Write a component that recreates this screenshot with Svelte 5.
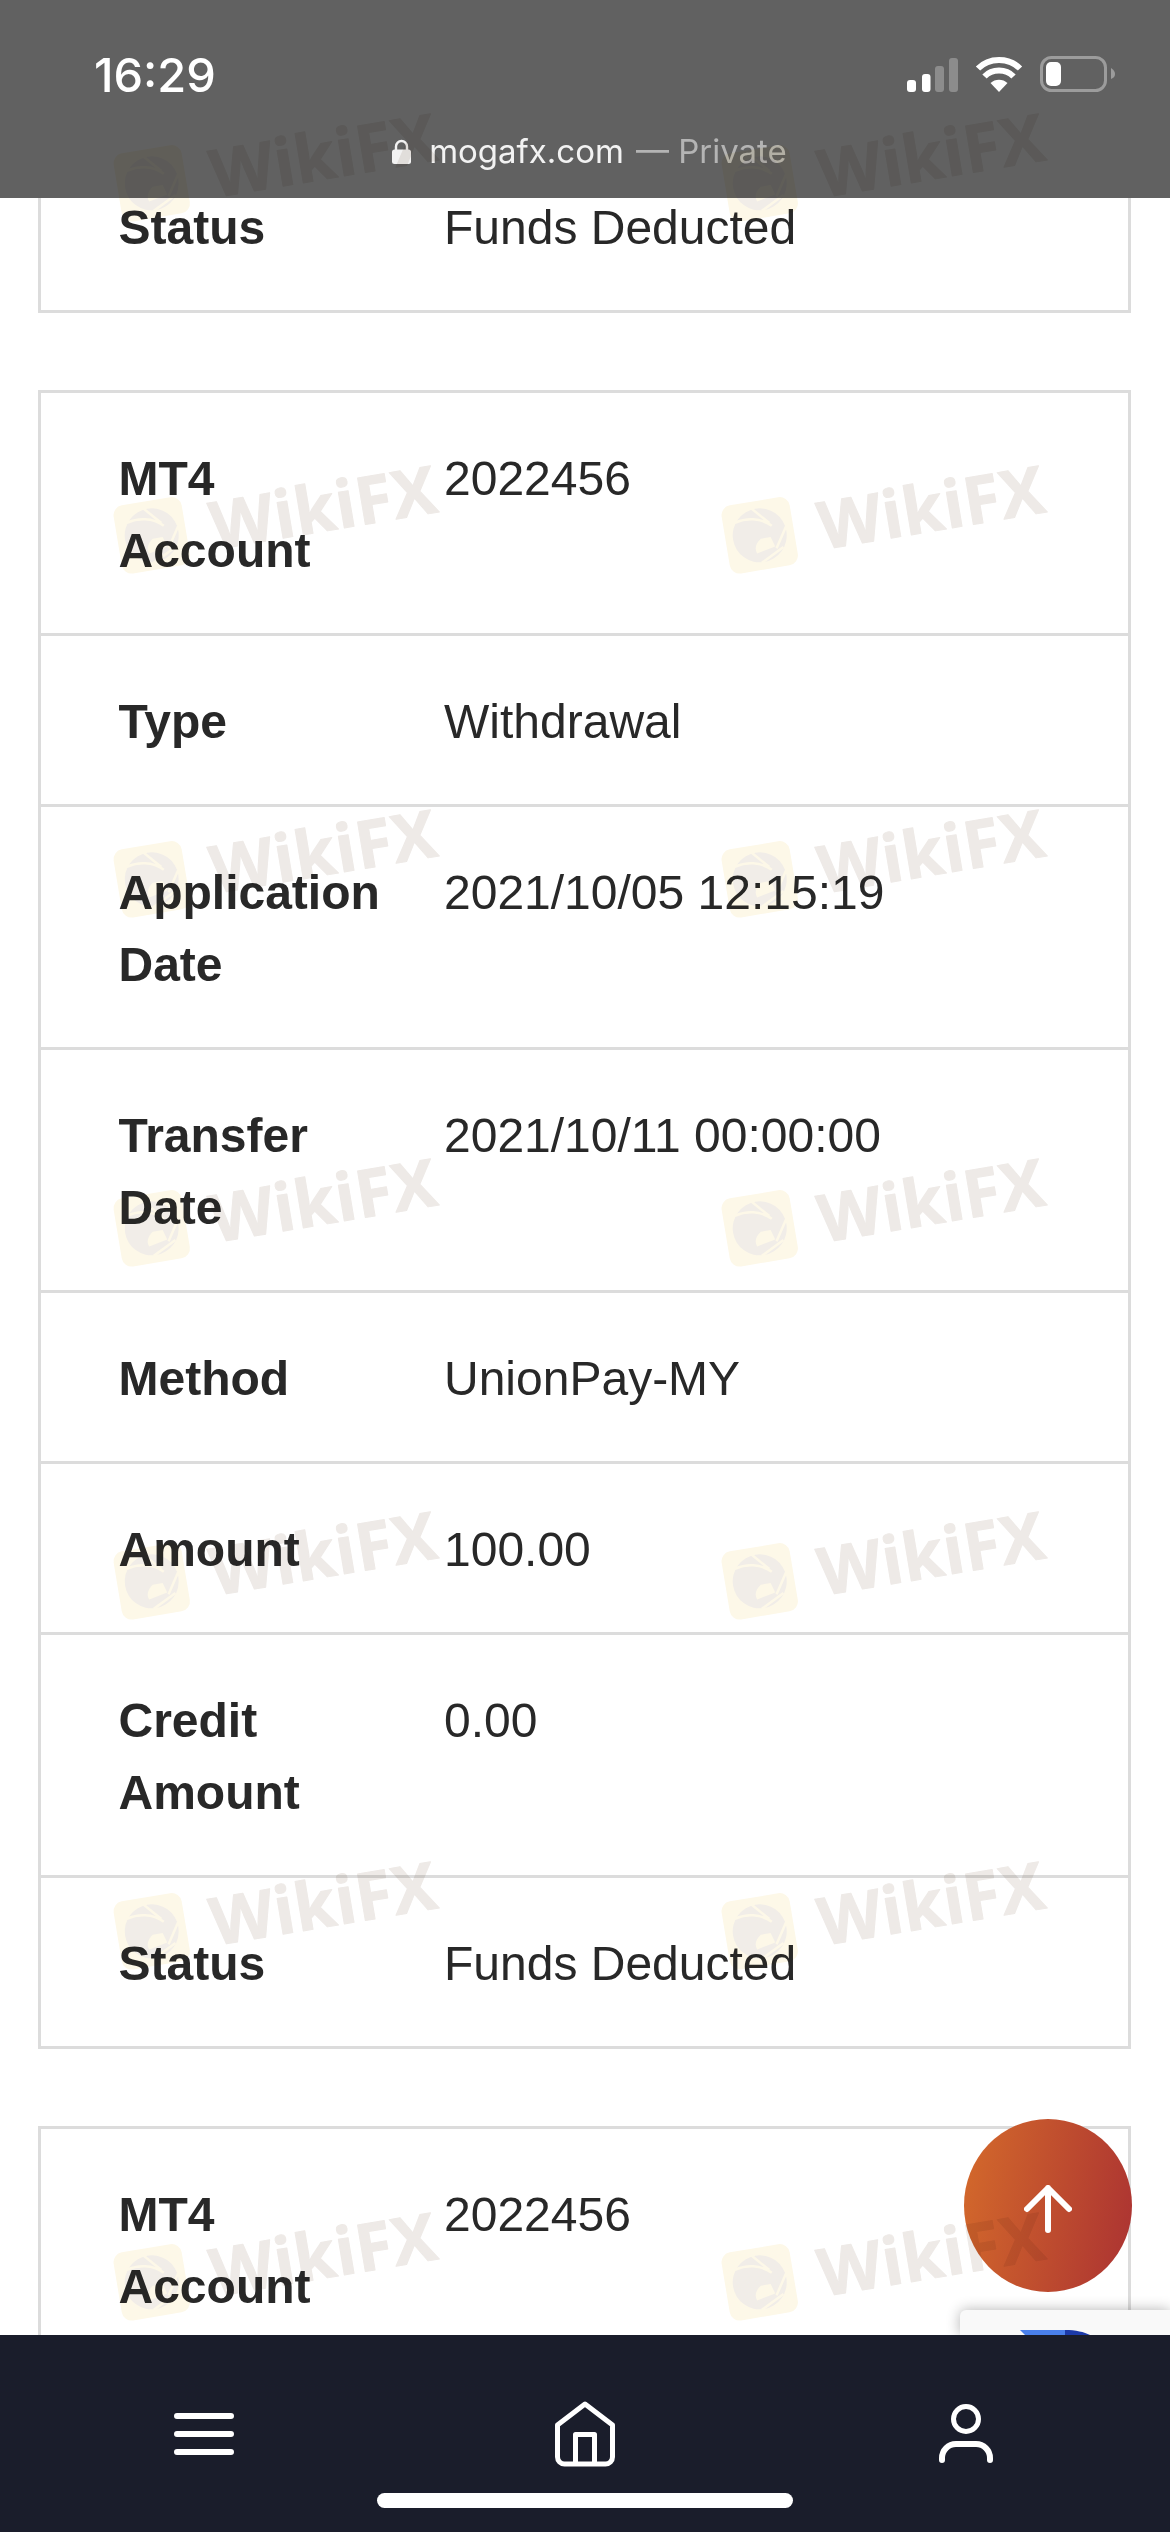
<script>
	const transactions = [0, 1, 2].map(() => [
		{ label: 'MT4 Account', value: '2022456' },
		{ label: 'Type', value: 'Withdrawal' },
		{ label: 'Application Date', value: '2021/10/05 12:15:19' },
		{ label: 'Transfer Date', value: '2021/10/11 00:00:00' },
		{ label: 'Method', value: 'UnionPay-MY' },
		{ label: 'Amount', value: '100.00' },
		{ label: 'Credit Amount', value: '0.00' },
		{ label: 'Status', value: 'Funds Deducted' }
	]);

	// watermark tile tops, one row every 350px or so
	const markRows = [155, 507, 851, 1200, 1553, 1903, 2254];
	const markCols = [112, 720];
</script>

<div class="phone">
	<header class="topbar">
		<div class="status">
			<span class="time">16:29</span>
			<div class="status-icons">
				<svg width="51" height="34" viewBox="0 0 51 34" aria-hidden="true">
					<rect x="0" y="22" width="9" height="12" rx="3" fill="#fff" />
					<rect x="15" y="16" width="8.5" height="18" rx="3" fill="#fff" />
					<rect x="28" y="8" width="9" height="26" rx="3" fill="#8c8c8c" />
					<rect x="42" y="0" width="9" height="34" rx="3" fill="#8c8c8c" />
				</svg>
				<svg width="48" height="36" viewBox="0 0 48 36" aria-hidden="true">
					<path d="M24 36 L15.5 27 C20 22.5 28 22.5 32.5 27 Z" fill="#fff" />
					<path d="M9.5 20.5 C17 12.5 31 12.5 38.5 20.5" fill="none" stroke="#fff" stroke-width="6" />
					<path d="M3 12.5 C14 1 34 1 45 12.5" fill="none" stroke="#fff" stroke-width="6" />
				</svg>
				<svg width="75" height="36" viewBox="0 0 75 36" aria-hidden="true">
					<rect x="1.5" y="1.5" width="64" height="33" rx="10" fill="none" stroke="#9c9c9c" stroke-width="3" />
					<rect x="6" y="6" width="15" height="24" rx="5" fill="#fff" />
					<path d="M71 12 C74 14 75 16 75 18 C75 20 74 22 71 23 Z" fill="#9c9c9c" />
				</svg>
			</div>
		</div>
		<div class="address">
			<svg width="19" height="25" viewBox="0 0 19 25" aria-hidden="true">
				<path d="M4 11 V7.5 a5.5 5.5 0 0 1 11 0 V11" fill="none" stroke="#f2f2f2" stroke-width="2.4" />
				<rect x="0" y="10.5" width="19" height="14.5" rx="2.5" fill="#f2f2f2" />
			</svg>
			<span class="domain">mogafx.com</span>
			<span class="private">— Private</span>
		</div>
	</header>

	<main class="content">
		{#each transactions as rows}
			<section class="card">
				{#each rows as row}
					<div class="row">
						<div class="label">{row.label}</div>
						<div class="value">{row.value}</div>
					</div>
				{/each}
			</section>
		{/each}
	</main>

	<nav class="tabbar">
		<div class="tabs">
			<svg width="60" height="42" viewBox="0 0 60 42" aria-hidden="true">
				<path d="M3 3 H57 M3 21 H57 M3 39 H57" stroke="#fff" stroke-width="6" stroke-linecap="round" />
			</svg>
			<svg width="60" height="66" viewBox="0 0 60 66" aria-hidden="true">
				<path d="M30 3 L2.5 24 V56 a7 7 0 0 0 7 7 H50.5 a7 7 0 0 0 7-7 V24 Z" fill="none" stroke="#fff" stroke-width="5" stroke-linejoin="round" />
				<path d="M20.5 63 V33.5 H39.5 V63" fill="none" stroke="#fff" stroke-width="5" stroke-linejoin="round" />
			</svg>
			<svg width="54" height="60" viewBox="0 0 54 60" aria-hidden="true">
				<circle cx="27" cy="15" r="12.5" fill="none" stroke="#fff" stroke-width="5" />
				<path d="M3 56 V54 a14 14 0 0 1 14-14 H37 a14 14 0 0 1 14 14 V56" fill="none" stroke="#fff" stroke-width="6" stroke-linecap="round" />
			</svg>
		</div>
		<div class="home-indicator"></div>
	</nav>

	<div class="recaptcha">
		<svg width="72" height="25" viewBox="0 0 72 25" aria-hidden="true">
			<path d="M0 20 H45 V25 H5 Z" fill="#4a80ec" />
			<path d="M45 20 C56 20 64 22 70 25 H45 Z" fill="#1c3aa9" />
		</svg>
	</div>

	<button class="to-top" aria-label="Back to top">
		<svg width="48" height="48" viewBox="0 0 48 48" aria-hidden="true">
			<path d="M24 3 V45 M3 24 L24 3 L45 24" fill="none" stroke="#fff" stroke-width="6" stroke-linecap="round" stroke-linejoin="round" />
		</svg>
	</button>

	<svg class="watermark" width="1170" height="2532" viewBox="0 0 1170 2532" aria-hidden="true">
		{#each markRows as y}
			{#each markCols as x}
				<g transform="translate({x} {y}) rotate(-9.5)">
					<rect width="69" height="69" rx="10" fill="#fdf8e8" />
					<circle cx="34.5" cy="34.5" r="27" fill="#f1ede8" />
					<path d="M31 7 L46 24 M62 30 L49 50 M32 62 L56 50 M12 18 C24 15 38 17 48 27" fill="none" stroke="#fdf8e8" stroke-width="2.5" />
					<path d="M45 38 L48 48 L29 52 C27 47 29 42 35 38 Z" fill="#fdf8e8" />
					<text class="mark-text" x="94" y="59" textLength="228" lengthAdjust="spacing">WikiFX</text>
				</g>
			{/each}
		{/each}
	</svg>
</div>

<style>
	:global(body) {
		margin: 0;
	}

	.phone {
		position: relative;
		width: 1170px;
		height: 2532px;
		display: flex;
		flex-direction: column;
		overflow: hidden;
		background: #fff;
		font-family: 'Liberation Sans', Arial, sans-serif;
		color: #282828;
	}

	.topbar {
		flex: 0 0 198px;
		box-sizing: border-box;
		padding: 46px 55px 0 94px;
		background: #616161;
		color: #fff;
		font-family: Inter, 'Liberation Sans', sans-serif;
	}

	.status {
		display: flex;
		justify-content: space-between;
		align-items: center;
		height: 56px;
	}

	.time {
		font-size: 47px;
		font-weight: 500;
	}

	.status-icons {
		display: flex;
		align-items: flex-end;
		gap: 17px;
	}

	.address {
		display: flex;
		justify-content: center;
		align-items: center;
		gap: 18px;
		margin: 24px 0 0 -30px;
		font-size: 33px;
		line-height: 50px;
	}

	.domain {
		color: #f2f2f2;
	}

	.private {
		margin-left: -6px;
		color: #b4b4b4;
	}

	.content {
		flex: 1;
		min-height: 0;
		overflow: hidden;
		display: flex;
		flex-direction: column;
		gap: 77px;
		padding: 0 39px 0 38px;
	}

	.card {
		flex: none;
		border: 3px solid #dcdcdc;
	}

	.card:first-child {
		margin-top: -1544px;
	}

	.row {
		display: grid;
		grid-template-columns: 403px 1fr;
		padding: 50px 0 46px;
		font-size: 48px;
		line-height: 72px;
		border-top: 3px solid #dcdcdc;
	}

	.row:first-child {
		border-top: none;
	}

	.label {
		padding: 0 50px 0 77.5px;
		font-weight: 700;
	}

	.tabbar {
		flex: 0 0 197px;
		box-sizing: border-box;
		position: relative;
		z-index: 3;
		padding-top: 66px;
		background: #1a1d2b;
	}

	.tabs {
		display: grid;
		grid-template-columns: repeat(3, 381px);
		justify-items: center;
		align-items: center;
		height: 66px;
		padding: 0 13.5px;
	}

	.tabs svg {
		display: block;
	}

	.home-indicator {
		width: 416px;
		height: 15px;
		margin: 26px auto 0;
		border-radius: 8px;
		background: #fff;
	}

	.to-top {
		position: absolute;
		left: 964px;
		top: 2119px;
		width: 168px;
		height: 173px;
		padding: 7px 0 0;
		box-sizing: border-box;
		border: none;
		border-radius: 50%;
		background: linear-gradient(100deg, #d46a2b, #ab3232);
		display: flex;
		align-items: center;
		justify-content: center;
	}

	.recaptcha {
		position: absolute;
		left: 960px;
		top: 2310px;
		width: 210px;
		height: 25px;
		padding-left: 60px;
		box-sizing: border-box;
		border-radius: 6px 0 0 0;
		background: #f9f9f9;
		box-shadow: 0 0 14px rgba(0, 0, 0, 0.3);
	}

	.recaptcha svg {
		display: block;
	}

	.watermark {
		position: absolute;
		left: 0;
		top: 0;
		pointer-events: none;
		mix-blend-mode: multiply;
		z-index: 2;
	}

	.mark-text {
		font-family: 'Open Sans', sans-serif;
		font-size: 66px;
		font-weight: 700;
		fill: #eeeae7;
		stroke: #eeeae7;
		stroke-width: 1;
		stroke-linejoin: round;
	}
</style>
